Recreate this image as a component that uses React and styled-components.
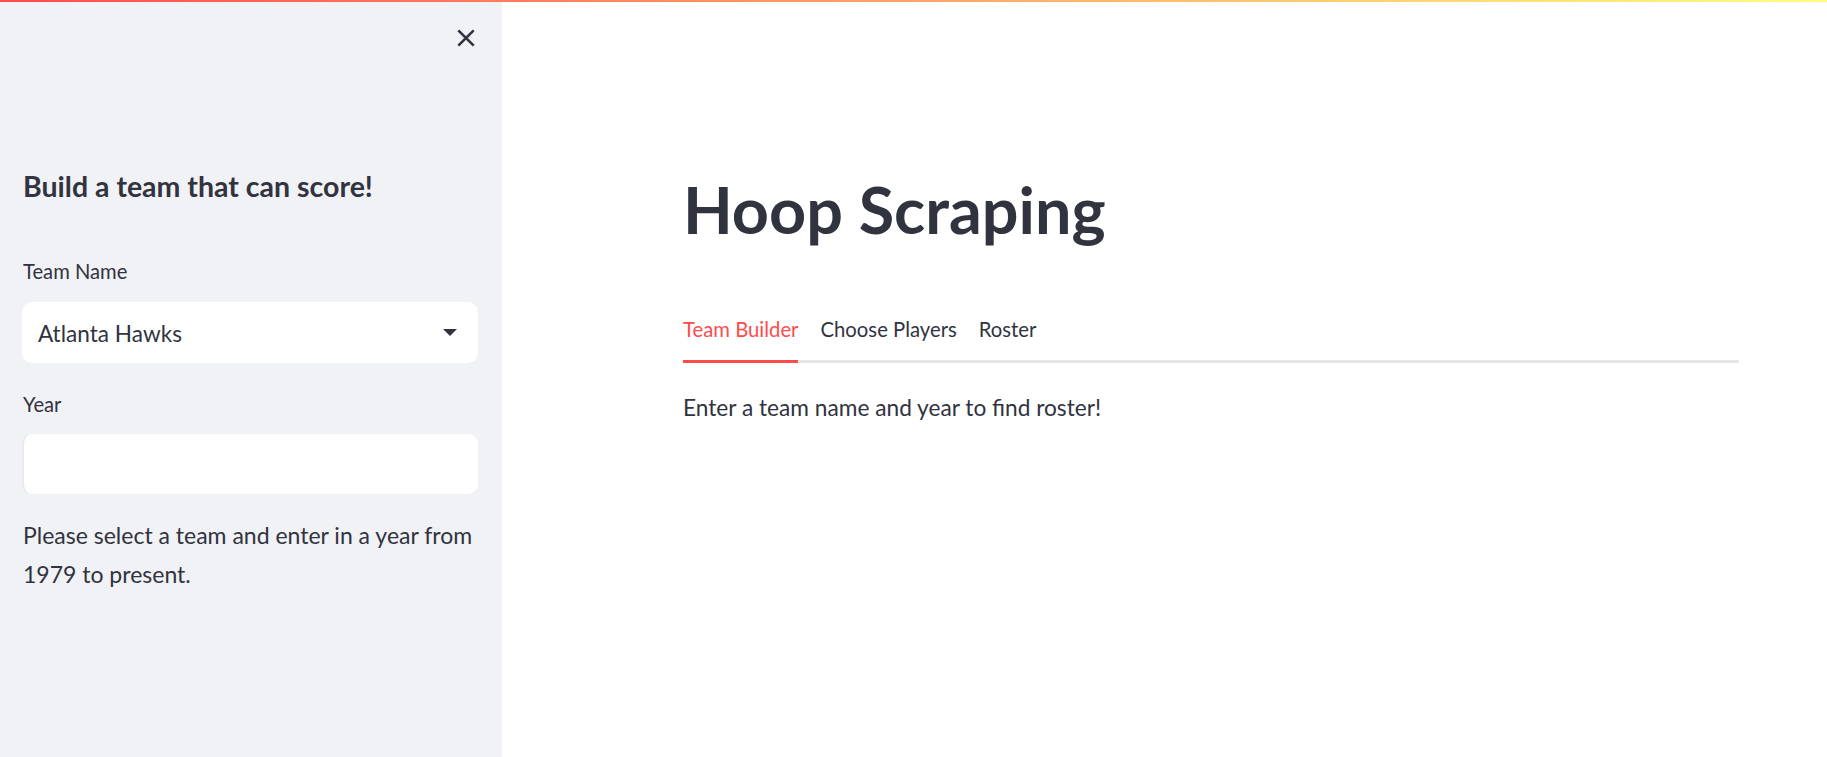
import React from "react";
import styled, { createGlobalStyle } from "styled-components";

const GlobalStyle = createGlobalStyle`
  html, body {
    margin: 0;
    padding: 0;
    background: #ffffff;
  }
  body {
    font-family: "Lato", "Noto Sans", sans-serif;
    color: #31333f;
    -webkit-font-smoothing: antialiased;
  }
  * { box-sizing: border-box; }
`;

const Page = styled.div`
  display: flex;
  min-height: 100vh;
  width: 100%;
`;

const Decoration = styled.div`
  position: fixed;
  top: 0;
  left: 0;
  right: 0;
  height: 2px;
  z-index: 10;
  background: linear-gradient(90deg, #ff4b4b, #fffd80);
`;

const Sidebar = styled.aside`
  flex: 0 0 502px;
  width: 502px;
  background: #f0f2f6;
  padding: 0 24px 0 22px;
  display: flex;
  flex-direction: column;
`;

const SidebarHeader = styled.div`
  height: 76px;
  display: flex;
  align-items: center;
  justify-content: flex-end;
  padding-right: 3px;
`;

const CloseButton = styled.button`
  border: none;
  background: transparent;
  padding: 0;
  width: 18px;
  height: 18px;
  display: flex;
  align-items: center;
  justify-content: center;
  color: #31333f;
  cursor: pointer;
`;

const SideHeading = styled.h3`
  margin: 92px 0 0 1px;
  font-size: 28.5px;
  line-height: 36px;
  font-weight: 700;
  color: #31333f;
`;

const FieldLabel = styled.label`
  display: block;
  margin: ${(p) => p.$top}px 0 0 1px;
  font-size: 20.2px;
  line-height: 33.6px;
  font-weight: 400;
  color: #31333f;
`;

const SelectBox = styled.div`
  margin-top: 13px;
  height: 61px;
  background: #ffffff;
  border-radius: 10px;
  display: flex;
  align-items: center;
  justify-content: space-between;
  padding: 3px 21px 0 16px;
  font-size: 22.6px;
  line-height: 28px;
  color: #31333f;
`;

const Caret = styled.svg`
  margin-top: -3px;
  flex: 0 0 auto;
`;

const InputBox = styled.div`
  margin-top: 13px;
  height: 60px;
  background: #ffffff;
  border-radius: 10px;
  border-left: 2px solid #e9eaee;
`;

const SideText = styled.p`
  margin: 22px 0 0 1px;
  font-size: 23px;
  line-height: 38.4px;
  color: #31333f;
`;

const Main = styled.main`
  flex: 1;
  padding: 170px 0 0 181px;
`;

const Content = styled.div`
  width: 1056px;
`;

const Title = styled.h1`
  margin: 0;
  font-size: 64.7px;
  line-height: 79px;
  font-weight: 700;
  color: #31333f;
`;

const TabList = styled.div`
  margin-top: 51px;
  display: flex;
  gap: 22px;
  border-bottom: 3px solid #e6e6e6;
`;

const Tab = styled.button`
  height: 63px;
  margin-bottom: -3px;
  padding: 2px 0 3px;
  border: none;
  border-bottom: 3px solid ${(p) => (p.$active ? "#ff4b4b" : "transparent")};
  background: transparent;
  font-family: inherit;
  font-size: 20.3px;
  line-height: 25px;
  color: ${(p) => (p.$active ? "#ff4b4b" : "#31333f")};
  display: flex;
  align-items: center;
  cursor: pointer;
`;

const BodyText = styled.p`
  margin: 26px 0 0;
  font-size: 22.7px;
  line-height: 38.4px;
  color: #31333f;
`;

const CloseIcon = () => (
  <svg width="18" height="18" viewBox="0 0 18 18" fill="none" stroke="currentColor" strokeWidth="2.6">
    <path d="M1.3 1.3L16.7 16.7M16.7 1.3L1.3 16.7" />
  </svg>
);

export default function App() {
  return (
    <>
      <GlobalStyle />
      <Decoration />
      <Page>
        <Sidebar>
          <SidebarHeader>
            <CloseButton aria-label="Close sidebar">
              <CloseIcon />
            </CloseButton>
          </SidebarHeader>
          <SideHeading>Build a team that can score!</SideHeading>
          <FieldLabel $top={51}>Team Name</FieldLabel>
          <SelectBox>
            <span>Atlanta Hawks</span>
            <Caret width="14" height="7" viewBox="0 0 14 7" fill="#31333f">
              <polygon points="0,0 14,0 7,7" />
            </Caret>
          </SelectBox>
          <FieldLabel $top={25}>Year</FieldLabel>
          <InputBox />
          <SideText>
            Please select a team and enter in a year from 1979 to present.
          </SideText>
        </Sidebar>
        <Main>
          <Content>
            <Title>Hoop Scraping</Title>
            <TabList>
              <Tab $active>Team Builder</Tab>
              <Tab>Choose Players</Tab>
              <Tab>Roster</Tab>
            </TabList>
            <BodyText>Enter a team name and year to find roster!</BodyText>
          </Content>
        </Main>
      </Page>
    </>
  );
}
